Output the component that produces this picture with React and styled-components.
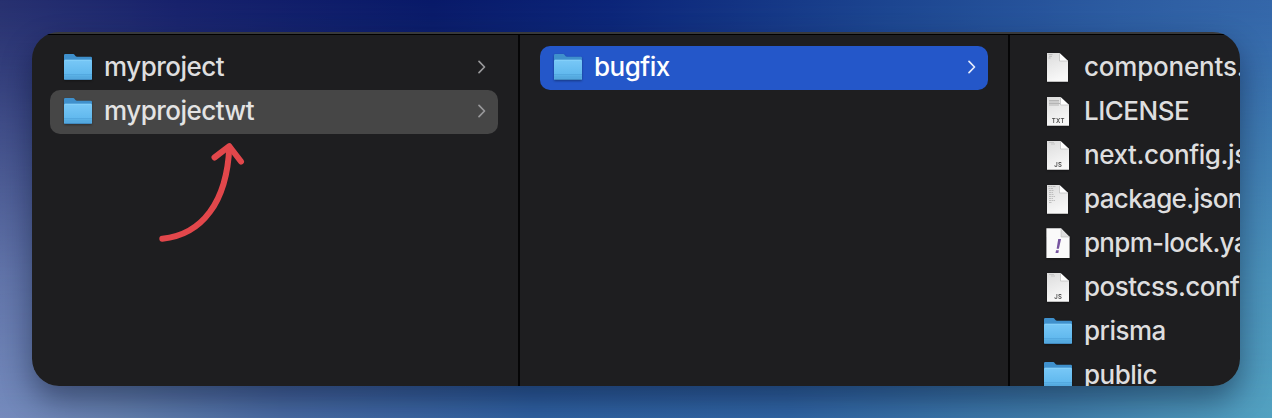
import React from "react";
import styled, { createGlobalStyle, css } from "styled-components";

const GlobalStyle = createGlobalStyle`
  html, body { margin: 0; padding: 0; }
  body { overflow: hidden; }
  *, *::before, *::after { box-sizing: border-box; }
`;

const Desktop = styled.div`
  position: relative;
  isolation: isolate;
  width: 100vw;
  height: 100vh;
  padding: 32px;
  background: linear-gradient(90deg, #758bbd 0%, #6682b0 9%, #4a6ca4 22%, #3062a2 42%, #3166a5 62%, #4180ad 83%, #53a2c1 100%);
  font-family: Inter, "Liberation Sans", sans-serif;

  &::before {
    content: "";
    position: absolute;
    inset: 0;
    z-index: -1;
    background: linear-gradient(90deg, #27306f 0%, #17216b 14%, #081968 34%, #0b2478 48%, #1c4590 70%, #2c5ba1 88%, #3466a9 100%);
    mask-image: linear-gradient(180deg, #000 0%, rgba(0, 0, 0, 0.86) 15%, rgba(0, 0, 0, 0.26) 65%, transparent 100%);
  }
`;

const Window = styled.main`
  position: relative;
  display: flex;
  height: 354px;
  padding-top: 3px;
  border-radius: 27px;
  overflow: hidden;
  background: linear-gradient(180deg, #38393b 0 2px, #000 2px 3px, #1e1e20 3px);
  box-shadow: 0 14px 30px rgba(0, 8, 30, 0.42);
`;

const Column = styled.section`
  flex: 0 0 ${(p) => p.$width}px;
  padding: 11px 20px 0 ${(p) => p.$inset}px;
  border-right: ${(p) => (p.$last ? "none" : "2px solid #050506")};
`;

const tones = {
  active: css`
    background: #2457c9;
    color: #ffffff;
  `,
  muted: css`
    background: #464646;
    color: #e3e3e3;
  `,
};

const Row = styled.div`
  display: flex;
  align-items: center;
  height: 44px;
  padding: 0 11px 2px 12px;
  border-radius: 10px;
  color: #dededf;
  ${(p) => tones[p.$tone]}
`;

const IconSlot = styled.span`
  display: flex;
  flex: 0 0 32px;
  height: 36px;

  svg {
    overflow: visible;
    filter: drop-shadow(0 1px 1px rgba(0, 0, 0, 0.35));
  }
`;

const Label = styled.span`
  flex: 1;
  margin-left: 10px;
  font-size: 26px;
  font-weight: 500;
  line-height: 42px;
  letter-spacing: ${(p) => p.$tracking || 0}px;
  white-space: nowrap;
`;

const Chevron = styled.svg`
  flex: none;
  color: ${(p) => (p.$bright ? "#e4ebfb" : "#98989a")};
`;

const Arrow = styled.svg`
  position: absolute;
  left: 118px;
  top: 98px;
`;

function Folder() {
  return (
    <svg width="32" height="36" viewBox="0 0 32 36">
      <defs>
        <linearGradient id="folderFront" x1="0" y1="0" x2="0" y2="1">
          <stop offset="0" stopColor="#78c8f7" />
          <stop offset="0.7" stopColor="#62b9ee" />
          <stop offset="1" stopColor="#55a9df" />
        </linearGradient>
      </defs>
      <path d="M2 6.200a1.200 1.200 0 0 1 1.200-1.200h7.300c1.300 0 1.800.5 2.600 1.400.9 1 1.400 1.400 2.600 1.400H28.800a1.200 1.200 0 0 1 1.200 1.200V16H2z" fill="#3f90cc" />
      <path d="M2 12a1.200 1.200 0 0 1 1.200-1.200h25.600a1.200 1.200 0 0 1 1.200 1.200v17.700a1.200 1.200 0 0 1-1.200 1.200H3.200a1.200 1.200 0 0 1-1.200-1.200z" fill="url(#folderFront)" />
      <path d="M3 11.3h26" stroke="#8ed5fb" strokeWidth="0.7" />
      <path d="M2 25.700h28M2 28h28" stroke="#4b9dd5" strokeWidth="0.7" />
      <path d="M3 30.400h26" stroke="#397eb4" strokeWidth="0.8" />
    </svg>
  );
}

function PreviewLines({ kind }) {
  if (kind === "text")
    return <path d="M7 7.500h10M7 9h10M7 10.500h11M7 12h10" stroke="#b5b5b5" strokeWidth="1.100" />;
  if (kind === "package")
    return <path d="M6 5.500h8M6.500 7.500h5M7 9.500h5M7 11.500h4M7 13.500h5M7 15.500h6M7 17.500h4M7 19.500h6M7 21.500h3" stroke="#b5b5b5" strokeWidth="0.8" strokeDasharray="2 .5" />;
  if (kind === "brief")
    return <path d="M6.500 5.500h4M7 7.300h3M6.500 9h2" stroke="#b4b4b4" strokeWidth="0.8" />;
  return <path d="M7 5.500h5M9 7h4" stroke="#bdbdbd" strokeWidth="0.7" />;
}

function Document({ kind, tag }) {
  const yaml = kind === "yaml";
  const right = tag ? 27 : yaml ? 27.600 : 26;
  const left = yaml ? 4.400 : 5;
  return (
    <svg width="32" height="36" viewBox="0 0 32 36">
      <defs>
        <linearGradient id="paper" x1="0" y1="0" x2="0.3" y2="1">
          <stop offset="0" stopColor="#dcdcdc" />
          <stop offset="1" stopColor="#f8f8f8" />
        </linearGradient>
      </defs>
      <path
        d={`M${left} ${yaml ? 3.300 : 4}H${right - 8.500}L${right} 12V${yaml ? 33 : 32.800}H${left}Z`}
        fill={yaml ? "#fafafa" : "url(#paper)"}
      />
      <path d={`M${right - 8.500} 4V12H${right}Z`} fill={yaml ? "#dedede" : "#fff"} />
      <path d={`M${right - 8.500} 4V12H${right}`} fill="none" stroke="#bcbcbc" strokeWidth="0.7" />
      {yaml ? (
        <text x="16" y="28.300" textAnchor="middle" fontFamily="Liberation Sans, sans-serif" fontSize="20" fontWeight="700" fontStyle="italic" fill="#76549f">!</text>
      ) : (
        <PreviewLines kind={kind} />
      )}
      {tag && (
        <text x="16.200" y="29.700" textAnchor="middle" fontFamily="Inter, sans-serif" fontSize="6" fontWeight="600" letterSpacing="0.3" fill="#484848">{tag}</text>
      )}
    </svg>
  );
}

function Entry({ name, tone, tracking, doc, open }) {
  return (
    <Row $tone={tone}>
      <IconSlot>{doc ? <Document {...doc} /> : <Folder />}</IconSlot>
      <Label $tracking={tracking}>{name}</Label>
      {open && (
        <Chevron $bright={tone === "active"} width="10" height="16" viewBox="0 0 10 16">
          <path d="M2 2.300 7.500 8 2 13.700" fill="none" stroke="currentColor" strokeWidth="1.700" strokeLinecap="round" strokeLinejoin="round" />
        </Chevron>
      )}
    </Row>
  );
}

const projectFiles = [
  { name: "components.json", tracking: -0.2, doc: { kind: "brief" } },
  { name: "LICENSE", tracking: -0.5, doc: { kind: "text", tag: "TXT" } },
  { name: "next.config.js", tracking: -0.4, doc: { kind: "code", tag: "JS" } },
  { name: "package.json", tracking: -0.65, doc: { kind: "package" } },
  { name: "pnpm-lock.yaml", tracking: -0.7, doc: { kind: "yaml" } },
  { name: "postcss.config.js", tracking: -0.5, doc: { kind: "code", tag: "JS" } },
  { name: "prisma", tracking: -0.5 },
  { name: "public", tracking: -0.5 },
];

export default function App() {
  return (
    <>
      <GlobalStyle />
      <Desktop>
        <Window>
          <Column $width={488} $inset={18}>
            <Entry name="myproject" tracking={-0.5} open />
            <Entry name="myprojectwt" tone="muted" tracking={-0.5} open />
          </Column>
          <Column $width={490} $inset={20}>
            <Entry name="bugfix" tone="active" tracking={-0.5} open />
          </Column>
          <Column $width={480} $inset={20} $last>
            {projectFiles.map((file) => (
              <Entry key={file.name} {...file} />
            ))}
          </Column>
          <Arrow width="110" height="120" viewBox="0 0 110 120" fill="none" stroke="#e2474b" strokeWidth="6" strokeLinecap="round" strokeLinejoin="round">
            <path d="M12.300 108.700C52 105 77 72 79.300 17" />
            <path d="M64.500 27.500 79.300 16.200 91 31.500" />
          </Arrow>
        </Window>
      </Desktop>
    </>
  );
}
